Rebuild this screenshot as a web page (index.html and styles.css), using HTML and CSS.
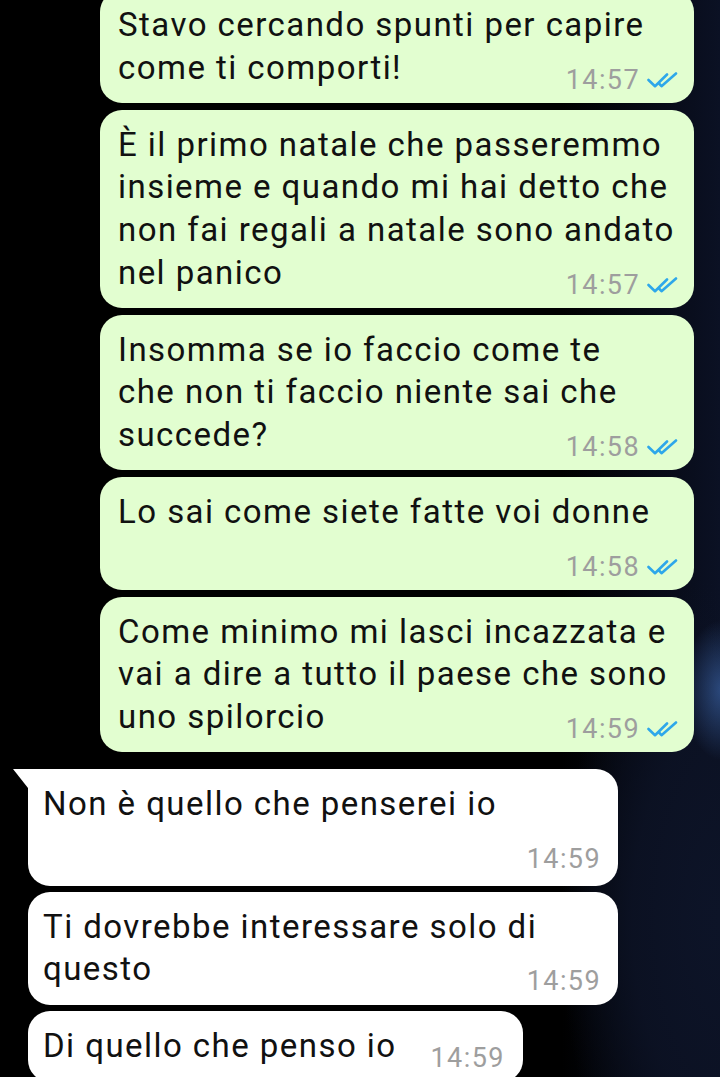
FILE: index.html
```html
<!DOCTYPE html>
<html lang="it">
<head>
<meta charset="utf-8">
<title>Chat</title>
<link rel="stylesheet" href="styles.css">
</head>
<body>
<div class="chat">
  <div class="bubble out first">
    <span class="text">Stavo cercando spunti per capire<br>come ti comporti!</span>
    <span class="meta"><span class="time">14:57</span><svg class="ticks" viewBox="0 0 31 16"><path d="M1.5 8 L8 14.2 L20 2.5" /><path d="M12 11.5 L14.5 14.2 L29 1.5" /></svg></span>
  </div>
  <div class="bubble out">
    <span class="text">È il primo natale che passeremmo<br>insieme e quando mi hai detto che<br>non fai regali a natale sono andato<br>nel panico</span>
    <span class="meta"><span class="time">14:57</span><svg class="ticks" viewBox="0 0 31 16"><path d="M1.5 8 L8 14.2 L20 2.5" /><path d="M12 11.5 L14.5 14.2 L29 1.5" /></svg></span>
  </div>
  <div class="bubble out">
    <span class="text">Insomma se io faccio come te<br>che non ti faccio niente sai che<br>succede?</span>
    <span class="meta"><span class="time">14:58</span><svg class="ticks" viewBox="0 0 31 16"><path d="M1.5 8 L8 14.2 L20 2.5" /><path d="M12 11.5 L14.5 14.2 L29 1.5" /></svg></span>
  </div>
  <div class="bubble out">
    <div class="text">Lo sai come siete fatte voi donne</div>
    <span class="meta"><span class="time">14:58</span><svg class="ticks" viewBox="0 0 31 16"><path d="M1.5 8 L8 14.2 L20 2.5" /><path d="M12 11.5 L14.5 14.2 L29 1.5" /></svg></span>
  </div>
  <div class="bubble out">
    <span class="text">Come minimo mi lasci incazzata e<br>vai a dire a tutto il paese che sono<br>uno spilorcio</span>
    <span class="meta"><span class="time">14:59</span><svg class="ticks" viewBox="0 0 31 16"><path d="M1.5 8 L8 14.2 L20 2.5" /><path d="M12 11.5 L14.5 14.2 L29 1.5" /></svg></span>
  </div>

  <div class="bubble in tail">
    <div class="text">Non è quello che penserei io</div>
    <span class="meta"><span class="time">14:59</span></span>
  </div>
  <div class="bubble in">
    <span class="text">Ti dovrebbe interessare solo di<br>questo</span>
    <span class="meta"><span class="time">14:59</span></span>
  </div>
  <div class="bubble in fit">
    <span class="text">Di quello che penso io</span>
    <span class="meta"><span class="time">14:59</span></span>
  </div>
</div>
</body>
</html>
```

FILE: styles.css
```css
html, body {
  margin: 0;
  padding: 0;
}

body {
  width: 720px;
  height: 1077px;
  overflow: hidden;
  font-family: Roboto, "Noto Sans", "Liberation Sans", sans-serif;
  background-color: #000;
  background-image:
    radial-gradient(40px 70px at 722px 690px, rgba(70, 120, 200, 0.55), rgba(70, 120, 200, 0) 100%),
    radial-gradient(160px 340px at 720px 920px, #0d1428 0%, rgba(12, 18, 36, 0.9) 55%, rgba(0, 0, 0, 0) 100%),
    linear-gradient(to right, #000 0%, #000 78%, #0b1124 100%);
  background-repeat: no-repeat;
}

.chat {
  display: flex;
  flex-direction: column;
  gap: 7px;
}

.bubble {
  display: flow-root;
  position: relative;
  box-sizing: border-box;
  padding: 14px 16px 8px 18px;
  border-radius: 22px;
  font-size: 33px;
  letter-spacing: 1.45px;
  line-height: 42.67px;
  color: #111;
}

.bubble.out {
  align-self: flex-end;
  width: 594px;
  margin-right: 26px;
  background: #e2fed0;
}

.bubble.first {
  margin-top: -10px;
}

.bubble.in {
  align-self: flex-start;
  width: 590px;
  margin-left: 28px;
  padding-left: 15px;
  padding-right: 17px;
  padding-bottom: 9px;
  background: #fff;
}

.bubble.in + .bubble.in {
  margin-top: -1px;
}

.bubble.in.tail {
  margin-top: 10px;
  padding-bottom: 12px;
  border-top-left-radius: 0;
}

.bubble.in.tail::before {
  content: "";
  position: absolute;
  top: 0;
  left: -15px;
  width: 0;
  height: 0;
  border-top: 19px solid #fff;
  border-left: 15px solid transparent;
}

.bubble.in.fit {
  width: auto;
  padding-right: 18px;
}

.meta {
  float: right;
  display: flex;
  align-items: center;
  gap: 7px;
  margin-top: 18px;
  margin-left: 34px;
  height: 30px;
  line-height: 30px;
  font-size: 27px;
  letter-spacing: 1.4px;
  color: #9e9e9e;
}

.ticks {
  width: 31px;
  height: 16px;
  fill: none;
  stroke: #2ea7ea;
  stroke-width: 2.6;
  stroke-linecap: round;
  stroke-linejoin: round;
}
```
